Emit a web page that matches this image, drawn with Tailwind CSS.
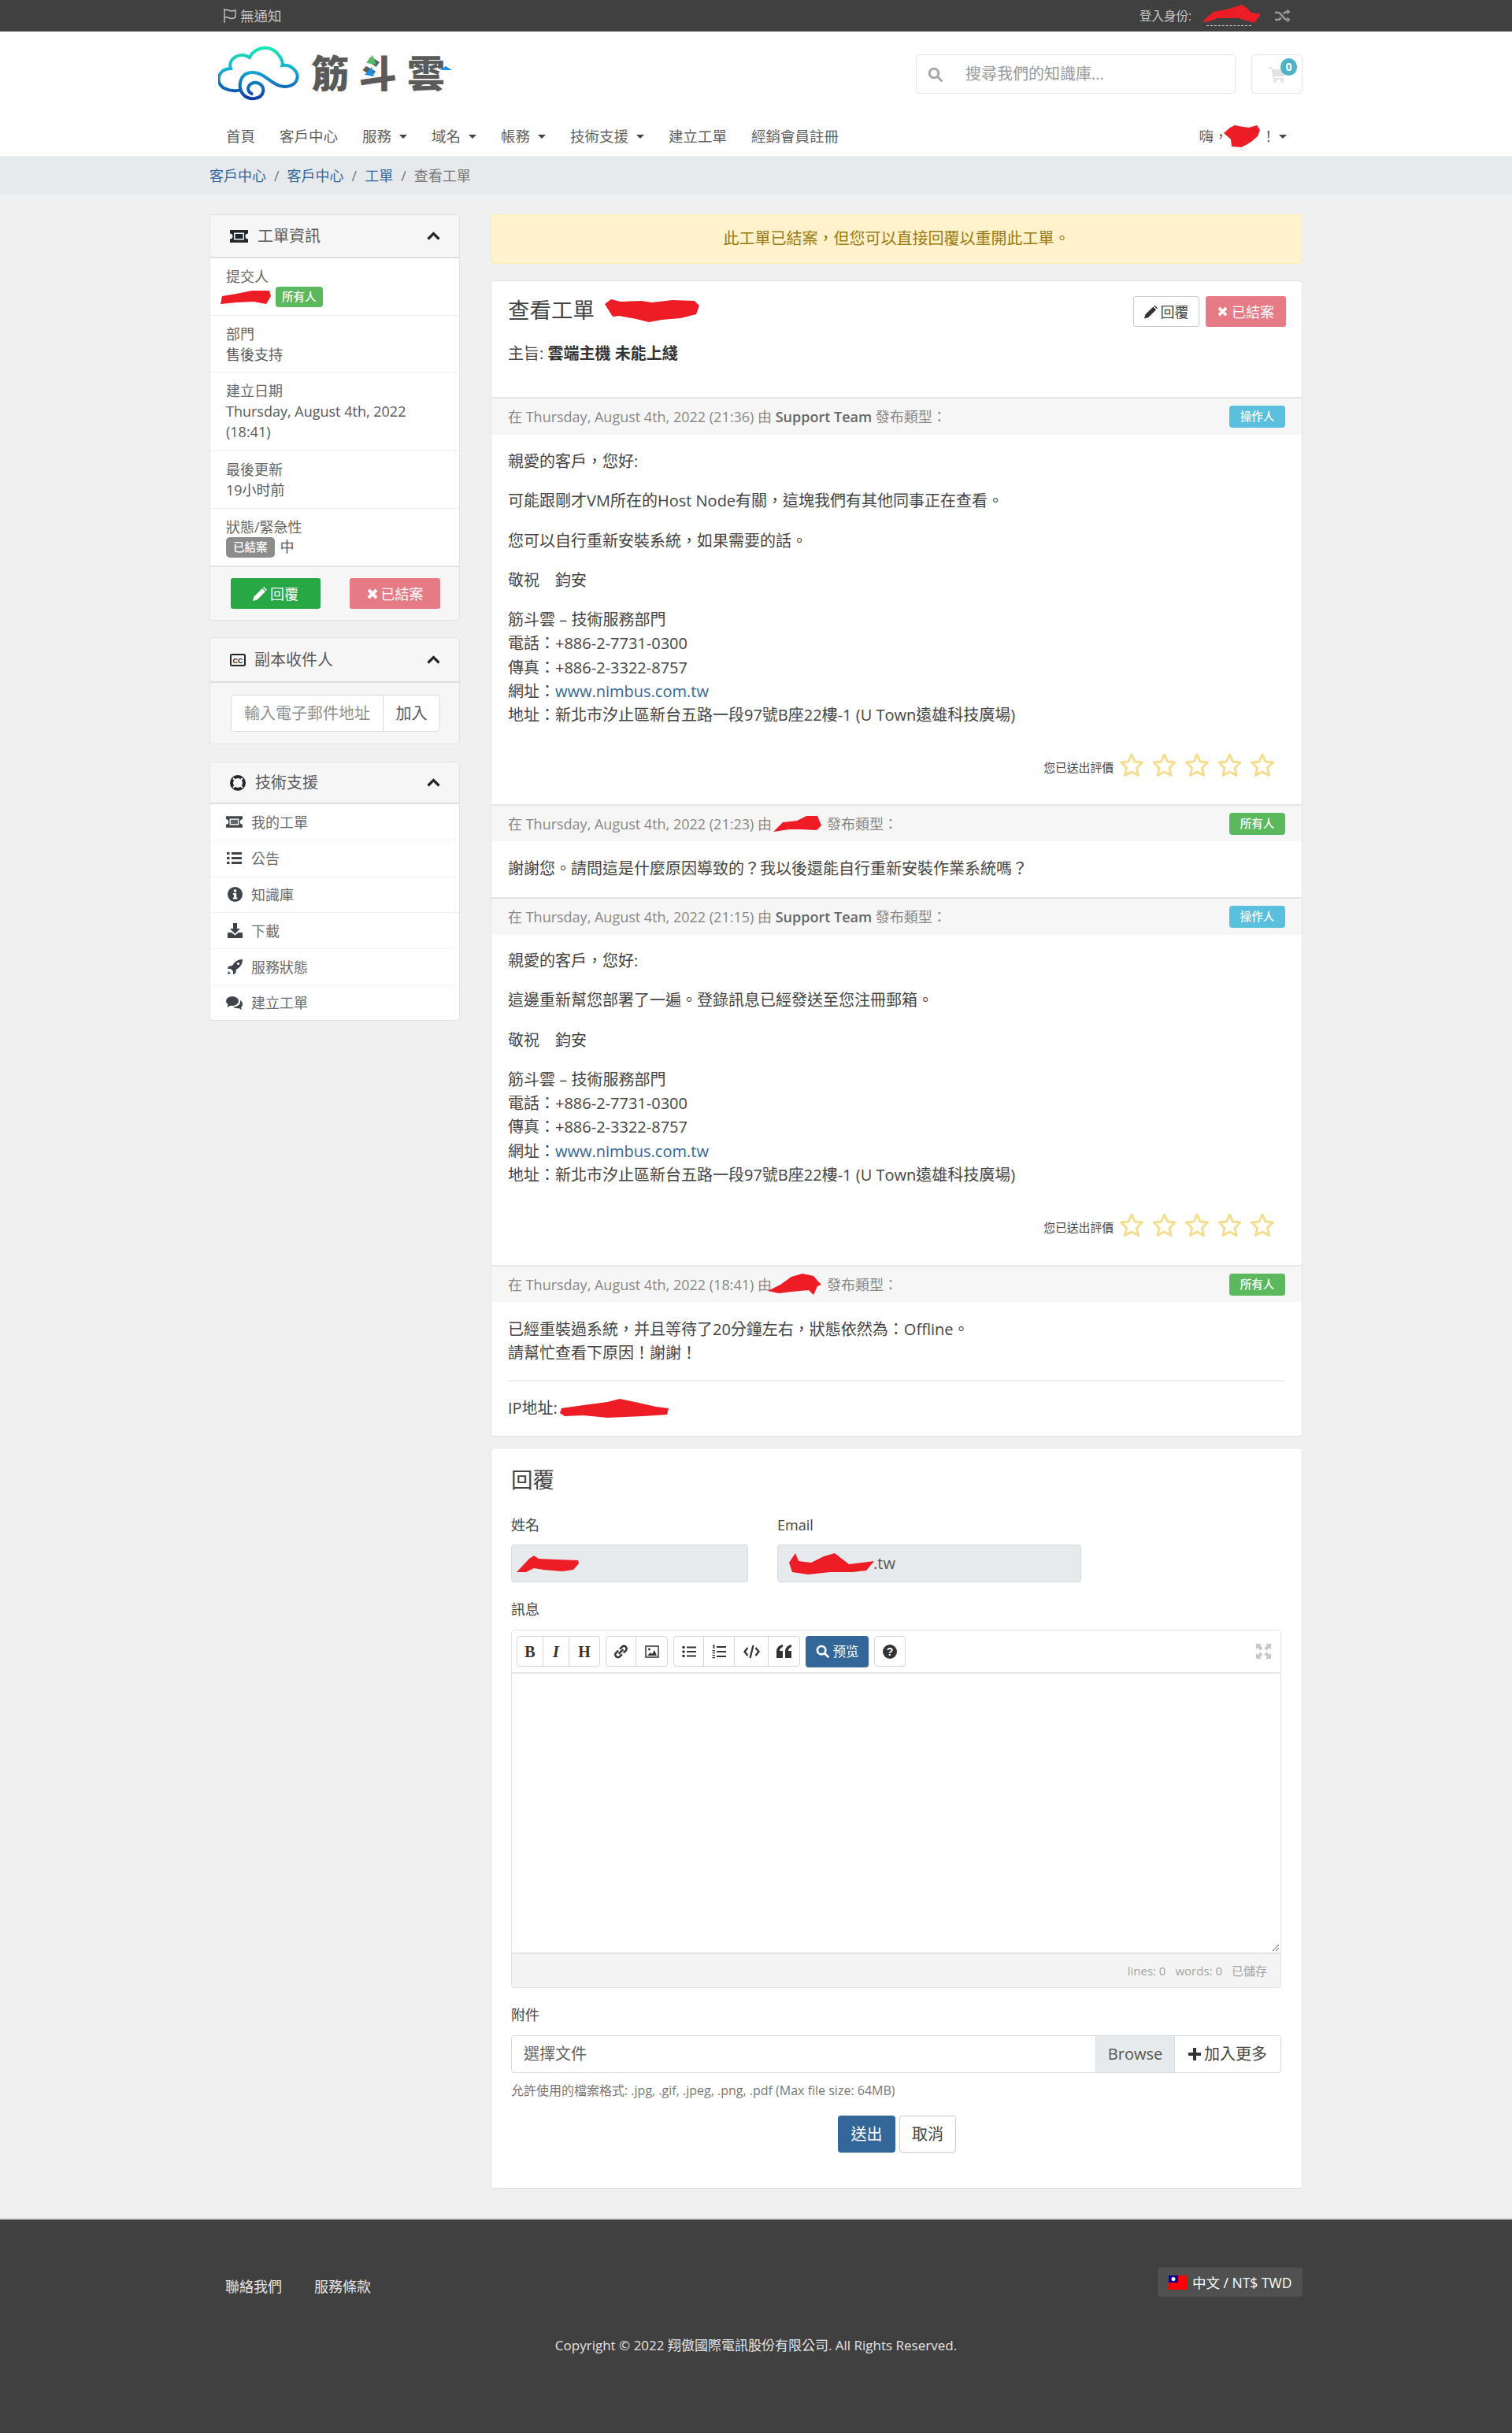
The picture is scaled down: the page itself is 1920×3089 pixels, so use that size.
<!DOCTYPE html>
<html lang="zh-Hant">

<head>
  <meta charset="utf-8">
  <meta name="viewport" content="width=device-width, initial-scale=1.0">
  <script src="https://cdn.jsdelivr.net/npm/@tailwindcss/browser@4"></script>
  <title>查看工單 - 筋斗雲</title>
</head>

<body class="bg-[#f0f0f0] text-[#58595b] [font-family:'Open_Sans','Noto_Sans_CJK_TC',sans-serif] text-[18px] leading-[26px] min-h-[3089px]">

  <!-- Top bar -->
  <div class="bg-[#404040] h-[40px]">
    <div class="w-[1388px] mx-auto h-full flex items-center justify-between text-[#c4c4c4]">
      <div class="flex items-center ml-[16px]">
        <svg class="w-[20px] h-[20px] mr-[3px]" viewBox="0 0 20 20" fill="none" stroke="#b5b5b5" stroke-width="1.6"><path d="M3 1v18"/><path d="M3 3c4-2 6 1 9 1 2 0 4-1 5-1v9c-1 .5-3 1.500-5 1.500-3 0-5-3-9-1"/></svg>
        <span class="text-[17.500px]">無通知</span>
      </div>
      <div class="flex items-center mr-[15px]">
        <span class="text-[15.500px] mr-[19px]">登入身份:</span>
        <span class="relative w-[57px] h-[24px] border-b border-dashed border-[#c4c4c4] mt-[2px] mr-[30px]">
          <svg class="absolute left-[-5px] top-[-3px] w-[74px] h-[23px]" viewBox="0 0 74 23"><path d="M0 21L14 9 30 6 50 0 56 4 62 10 74 12 66 23 45 17 20 17 5 22z" fill="#ee1c25"/></svg>
        </span>
        <svg class="w-[20px] h-[18px]" viewBox="0 0 20 18" fill="none" stroke="#9a9a9a" stroke-width="2.600"><path d="M0 5h4c4 0 7 9 11 9h2"/><path d="M0 14h4c1.500 0 2.500-1 3.500-2.500M11 6.500C12 5 13.500 4 15 4h2"/><path d="M15.500 0.500L19.500 4l-4 3.500zM15.500 10.500l4 3.500-4 3.500z" fill="#9a9a9a" stroke="none"/></svg>
      </div>
    </div>
  </div>

  <!-- Header -->
  <header class="bg-white h-[158px]">
    <div class="w-[1388px] mx-auto">
      <div class="flex justify-between items-start h-[108px]">
        <div class="relative ml-[11px] mt-[19px] w-[300px] h-[68px] flex items-center">
          <svg class="w-[103px] h-[70px] shrink-0" viewBox="50 55 310 210" fill="none">
            <defs>
              <linearGradient id="cloud" x1="0" y1="0" x2="0" y2="1">
                <stop offset="0" stop-color="#17e8b0"/>
                <stop offset="0.45" stop-color="#14a9d4"/>
                <stop offset="1" stop-color="#0b3fa6"/>
              </linearGradient>
            </defs>
            <path d="M130 225C90 232 50 215 52 180C54 155 75 142 98 142C85 105 135 75 170 100C190 60 250 45 285 95C295 110 298 120 295 130C330 125 358 155 352 180C345 210 310 215 285 208C245 195 220 150 170 158C130 165 125 215 145 240C165 265 215 262 222 230C228 200 190 185 170 205C160 218 165 232 178 238" stroke="url(#cloud)" stroke-width="12" stroke-linecap="round"/>
          </svg>
          <span class="ml-[15px] text-[48px] leading-none font-black tracking-[13px] text-[#5a5a5a] whitespace-nowrap">筋斗雲</span>
          <svg class="absolute left-0 top-0 w-[300px] h-[68px]" viewBox="0 0 300 68">
            <path d="M196 11L201 23 188 21z" fill="#57b96a"/>
            <path d="M195 26L198 38 186 36z" fill="#1b8fe8"/>
            <path d="M289 25L297 30 282 30z" fill="#1b8fe8"/>
          </svg>
        </div>
        <div class="flex mt-[29px]">
          <div class="w-[406px] h-[50px] bg-white border border-[#e3e3e3] rounded-[5px] flex items-center mr-[20px]">
            <svg class="w-[19px] h-[19px] ml-[14px] mr-[29px]" viewBox="0 0 19 19" fill="none" stroke="#a8a8a8" stroke-width="3"><circle cx="8" cy="8" r="5.800"/><path d="M12.500 12.500L17.500 17.500" stroke-linecap="round"/></svg>
            <span class="text-[20px] text-[#999]">搜尋我們的知識庫...</span>
          </div>
          <div class="relative w-[65px] h-[50px] border border-[#e3e3e3] rounded-[5px]">
            <svg class="absolute left-[21px] top-[15px] w-[22px] h-[20px]" viewBox="0 0 22 20" fill="#e2e2e2"><path d="M0 0h4l1 3h16l-2 9H7l.500 2H19v2H6L3 2H0z"/><circle cx="8" cy="18" r="2"/><circle cx="17" cy="18" r="2"/></svg>
            <span class="absolute left-[36px] top-[4px] w-[21px] h-[22px] rounded-full bg-[#4db3c6] text-white text-[14px] font-bold leading-[22px] text-center">0</span>
          </div>
        </div>
      </div>
      <nav class="flex items-center justify-between h-[50px] text-[18.500px] text-[#5f5f5f]">
        <div class="flex items-center ml-[21px] gap-[31px]">
          <span>首頁</span>
          <span>客戶中心</span>
          <span class="flex items-center">服務<i class="ml-[10px] w-0 h-0 border-x-[5px] border-x-transparent border-t-[5px] border-t-[#444]"></i></span>
          <span class="flex items-center">域名<i class="ml-[10px] w-0 h-0 border-x-[5px] border-x-transparent border-t-[5px] border-t-[#444]"></i></span>
          <span class="flex items-center">帳務<i class="ml-[10px] w-0 h-0 border-x-[5px] border-x-transparent border-t-[5px] border-t-[#444]"></i></span>
          <span class="flex items-center">技術支援<i class="ml-[10px] w-0 h-0 border-x-[5px] border-x-transparent border-t-[5px] border-t-[#444]"></i></span>
          <span>建立工單</span>
          <span>經銷會員註冊</span>
        </div>
        <div class="relative flex items-center mr-[20px]">
          <span>嗨，</span>
          <svg class="w-[46px] h-[28px] ml-[-5px] mr-[1px]" viewBox="0 0 46 28"><path d="M0 10L8 3 14 0 24 2 32 3 42 0 46 6 43 14 36 20 30 24 22 28 10 27 9 18z" fill="#ee1c25"/></svg>
          <span>！</span>
          <i class="ml-[4px] w-0 h-0 border-x-[5.500px] border-x-transparent border-t-[5.500px] border-t-[#444]"></i>
        </div>
      </nav>
    </div>
  </header>

  <!-- Breadcrumb -->
  <div class="bg-[#e7eaed] h-[49px]">
    <div class="w-[1388px] mx-auto h-full flex items-center text-[#336699] gap-[10px]">
      <span>客戶中心</span><span class="text-[#777]">/</span><span>客戶中心</span><span class="text-[#777]">/</span><span>工單</span><span class="text-[#777]">/</span><span class="text-[#777]">查看工單</span>
    </div>
  </div>

  <div class="w-[1388px] mx-auto flex items-start gap-[39px] pt-[25px]">

    <!-- Sidebar -->
    <aside class="w-[318px] shrink-0">
      <section class="bg-white border border-[#e2e2e2] rounded-[4px] overflow-hidden">
        <div class="h-[55px] bg-[#f6f6f6] border-b-2 border-[#dedede] flex items-center pl-[25px] pr-[24px] text-[20px]">
          <svg class="w-[23px] h-[16px] mr-[12px]" viewBox="0 0 23 16"><path d="M0 0h23v4.500a3.500 3.500 0 0 0 0 7V16H0v-4.500a3.500 3.500 0 0 0 0-7z" fill="#23272b"/><rect x="5" y="3.500" width="13" height="9" fill="#f6f6f6"/><rect x="6.500" y="5" width="10" height="6" fill="#23272b"/></svg>
          <span class="flex-1">工單資訊</span>
          <svg class="w-[17px] h-[11px]" viewBox="0 0 17 11" fill="none" stroke="#23272b" stroke-width="3.200"><path d="M1.500 9.500L8.500 2.500l7 7"/></svg>
        </div>
        <div class="px-[20px] py-[10px] border-b border-[#efefef] h-[73px]">
          <div class="text-[#666]">提交人</div>
          <div class="flex items-center">
            <svg class="w-[64px] h-[19px] -ml-[7px] mr-[6px]" viewBox="0 0 64 19"><path d="M2 8L20 5 40 1 62 1 64 8 58 18 42 15 20 16 0 18z" fill="#ee1c25"/></svg>
            <span class="bg-[#5cb85c] text-white text-[14.500px] leading-[26px] rounded-[4px] px-[8px] font-medium">所有人</span>
          </div>
        </div>
        <div class="px-[20px] py-[10px] border-b border-[#efefef] h-[72px]">
          <div class="text-[#666]">部門</div>
          <div>售後支持</div>
        </div>
        <div class="px-[20px] py-[10px] border-b border-[#efefef] h-[100px]">
          <div class="text-[#666]">建立日期</div>
          <div>Thursday, August 4th, 2022 (18:41)</div>
        </div>
        <div class="px-[20px] py-[10px] border-b border-[#efefef] h-[73px]">
          <div class="text-[#666]">最後更新</div>
          <div>19小时前</div>
        </div>
        <div class="px-[20px] py-[10px] h-[72px]">
          <div class="text-[#666]">狀態/緊急性</div>
          <div class="flex items-center">
            <span class="bg-[#8c8c8c] text-white text-[14.500px] leading-[26px] rounded-[5px] px-[9px] font-medium mr-[7px]">已結案</span>
            <span class="-mt-[3px]">中</span>
          </div>
        </div>
        <div class="h-[69px] bg-[#f6f6f6] border-t-2 border-[#e2e2e2] flex items-center justify-between pl-[26px] pr-[24px]">
          <span class="w-[114px] h-[39px] rounded-[3px] bg-[#28a745] text-white flex items-center justify-center gap-[4px]">
            <svg class="w-[18px] h-[18px]" viewBox="0 0 18 18" fill="#fff"><path d="M0 18l1.500-5.500L12 2l4 4L5.500 16.500zM13 1l1-1 4 4-1 1z"/></svg>回覆</span>
          <span class="w-[115px] h-[39px] rounded-[3px] bg-[#e67b86] text-white flex items-center justify-center gap-[4px]">
            <svg class="w-[14px] h-[14px]" viewBox="0 0 14 14" stroke="#fff" stroke-width="4"><path d="M2 2l10 10M12 2L2 12"/></svg>已結案</span>
        </div>
      </section>

      <section class="mt-[21px] bg-[#f6f6f6] border border-[#e2e2e2] rounded-[4px] overflow-hidden">
        <div class="h-[57px] border-b-2 border-[#dedede] flex items-center pl-[25px] pr-[24px] text-[20px]">
          <svg class="w-[20px] h-[16px] mr-[11px]" viewBox="0 0 20 16"><rect x="1" y="1" width="18" height="14" rx="1.500" fill="none" stroke="#23272b" stroke-width="2"/><text x="10" y="11.500" font-size="9" font-weight="700" text-anchor="middle" fill="#23272b" font-family="Liberation Sans, sans-serif">CC</text></svg>
          <span class="flex-1">副本收件人</span>
          <svg class="w-[17px] h-[11px]" viewBox="0 0 17 11" fill="none" stroke="#23272b" stroke-width="3.200"><path d="M1.500 9.500L8.500 2.500l7 7"/></svg>
        </div>
        <div class="pl-[26px] pr-[24px] py-[15px]">
          <div class="flex h-[47px] bg-white border border-[#d8dbde] rounded-[5px] text-[20px] items-center">
            <span class="w-[193px] h-full flex items-center pl-[16px] border-r border-[#d8dbde] text-[#8f8f8f] whitespace-nowrap">輸入電子郵件地址</span>
            <span class="flex-1 text-center">加入</span>
          </div>
        </div>
      </section>

      <section class="mt-[22px] bg-white border border-[#e2e2e2] rounded-[4px] overflow-hidden">
        <div class="h-[53px] bg-[#f6f6f6] border-b-2 border-[#dedede] flex items-center pl-[25px] pr-[24px] text-[20px]">
          <svg class="w-[20px] h-[20px] mr-[12px]" viewBox="0 0 20 20"><circle cx="10" cy="10" r="8" fill="none" stroke="#23272b" stroke-width="4"/><path d="M4 4l3 3M16 4l-3 3M4 16l3-3M16 16l-3-3" stroke="#f6f6f6" stroke-width="2"/></svg>
          <span class="flex-1">技術支援</span>
          <svg class="w-[17px] h-[11px]" viewBox="0 0 17 11" fill="none" stroke="#23272b" stroke-width="3.200"><path d="M1.500 9.500L8.500 2.500l7 7"/></svg>
        </div>
        <div class="h-[46px] flex items-center pl-[20px] border-b border-[#f2f2f2] text-[#6b6b6b]">
          <svg class="w-[21px] h-[15px] mr-[11px]" viewBox="0 0 23 16"><path d="M0 0h23v4.500a3.500 3.500 0 0 0 0 7V16H0v-4.500a3.500 3.500 0 0 0 0-7z" fill="#3f444a"/><rect x="5" y="3.500" width="13" height="9" fill="#fff"/><rect x="6.500" y="5" width="10" height="6" fill="#666"/></svg>我的工單</div>
        <div class="h-[46px] flex items-center pl-[20px] border-b border-[#f2f2f2] text-[#6b6b6b]">
          <svg class="w-[19px] h-[15px] mr-[12px] ml-[1px]" viewBox="0 0 19 15" fill="#3f444a"><rect y="0" width="3.500" height="3"/><rect y="6" width="3.500" height="3"/><rect y="12" width="3.500" height="3"/><rect x="6" y="0" width="13" height="3"/><rect x="6" y="6" width="13" height="3"/><rect x="6" y="12" width="13" height="3"/></svg>公告</div>
        <div class="h-[46px] flex items-center pl-[20px] border-b border-[#f2f2f2] text-[#6b6b6b]">
          <svg class="w-[19px] h-[19px] mr-[11px] ml-[2px]" viewBox="0 0 19 19"><circle cx="9.500" cy="9.500" r="9.500" fill="#3f444a"/><rect x="7.800" y="3.500" width="3.400" height="3" fill="#fff"/><path d="M6.800 8h4.400v5.500h1.200V15.500H6.800v-2h1.200V10H6.800z" fill="#fff"/></svg>知識庫</div>
        <div class="h-[46px] flex items-center pl-[20px] border-b border-[#f2f2f2] text-[#6b6b6b]">
          <svg class="w-[19px] h-[19px] mr-[11px] ml-[2px]" viewBox="0 0 19 19" fill="#3f444a"><path d="M7 0h5v7h4l-6.500 6.500L3 7h4z"/><path d="M0 12h5l4.500 3.500L14 12h5v7H0z"/></svg>下載</div>
        <div class="h-[46px] flex items-center pl-[20px] border-b border-[#f2f2f2] text-[#6b6b6b]">
          <svg class="w-[19px] h-[19px] mr-[11px] ml-[2px]" viewBox="0 0 19 19" fill="#3f444a"><path d="M19 0c0 6-3 10-8 13l-1 5-3 1v-4l-3-3H0l1-3 5-1c3-5 7-8 13-8z"/><path d="M1 15l3 3-4 1z"/><circle cx="13.500" cy="5.500" r="1.600" fill="#fff"/></svg>服務狀態</div>
        <div class="h-[44px] flex items-center pl-[20px] text-[#6b6b6b]">
          <svg class="w-[21px] h-[17px] mr-[11px]" viewBox="0 0 21 17" fill="#3f444a"><ellipse cx="8" cy="6" rx="8" ry="6"/><path d="M3 9L1.500 14 7 11z"/><path d="M18 5c2 1 3 3 3 5 0 2-1 3-2 4l1 3-4-2c-2 .5-5 0-7-2 5 .5 10-2 9-8z"/></svg>建立工單</div>
      </section>
    </aside>

    <!-- Main -->
    <main class="w-[1031px]">
      <div class="h-[63px] bg-[#fff2cc] border border-[#fdebb5] rounded-[4px] flex items-center justify-center text-[20px] text-[#9a7b12] pb-[2px]">此工單已結案，但您可以直接回覆以重開此工單。</div>

      <section class="mt-[21px] bg-white border border-[#e2e2e2] rounded-[4px] overflow-hidden">
        <div class="h-[147px] px-[21px] pt-[19px]">
          <div class="flex justify-between items-start">
            <h3 class="flex items-center text-[27.500px] leading-[38px] text-[#444] -mt-[2px] h-[40px]">查看工單<svg class="w-[124px] h-[29px] ml-[9px]" viewBox="0 0 124 29"><path d="M4 6L12 0 24 3 50 2 64 4 90 1 118 2 124 8 120 19 100 24 76 26 60 29 44 25 22 21 14 22z" fill="#ee1c25"/></svg></h3>
            <div class="flex gap-[8px] mr-[-1px]">
              <span class="w-[84px] h-[39px] bg-white border border-[#ccc] rounded-[3px] flex items-center justify-center gap-[4px] text-[#444]">
                <svg class="w-[17px] h-[18px]" viewBox="0 0 18 18" fill="#333"><path d="M0 18l1.500-5.500L12 2l4 4L5.500 16.500zM13 1l1-1 4 4-1 1z"/></svg>回覆</span>
              <span class="w-[102px] h-[39px] bg-[#e67b86] text-white rounded-[3px] flex items-center justify-center gap-[5px]">
                <svg class="w-[13px] h-[13px]" viewBox="0 0 14 14" stroke="#fff" stroke-width="4"><path d="M2 2l10 10M12 2L2 12"/></svg>已結案</span>
            </div>
          </div>
          <p class="mt-[19px] text-[20px] leading-[30px] text-[#444]">主旨: <b class="font-bold text-[#333]">雲端主機 未能上綫</b></p>
        </div>

        <!-- reply 1 -->
        <div class="h-[48px] bg-[#f6f6f6] border-t-2 border-[#e6e6e6] flex items-center justify-between px-[21px] text-[#888]">
          <span>在 Thursday, August 4th, 2022 (21:36) 由 <b class="font-semibold text-[#666]">Support Team</b> 發布類型：</span>
          <span class="w-[71px] h-[28px] rounded-[4px] bg-[#5bc0de] text-white text-[14.500px] leading-[28px] text-center font-medium">操作人</span>
        </div>
        <div class="px-[21px] pt-[19px] h-[469px] text-[20px] leading-[30.250px] text-[#444]">
          <p>親愛的客戶，您好:</p>
          <p class="mt-[20px]">可能跟剛才VM所在的Host Node有關，這塊我們有其他同事正在查看。</p>
          <p class="mt-[20px]">您可以自行重新安裝系統，如果需要的話。</p>
          <p class="mt-[20px]">敬祝　鈞安</p>
          <p class="mt-[20px]">筋斗雲 – 技術服務部門<br>電話：+886-2-7731-0300<br>傳真：+886-2-3322-8757<br>網址：<span class="text-[#336699]">www.nimbus.com.tw</span><br>地址：新北市汐止區新台五路一段97號B座22樓-1 (U Town遠雄科技廣場)</p>
          <div class="flex justify-end items-center mt-[32px] mr-[3px]">
            <span class="text-[14.800px] leading-[20px] mr-[7px] mt-[6px]">您已送出評價</span>
            <svg class="w-[208px] h-[32px]" viewBox="0 0 208 32" fill="none" stroke="#f5dd8e" stroke-width="3" stroke-linejoin="round"><path id="s" d="M16 3l4 9 9.500 1-7 7 2 9.500L16 25l-8.500 4.500 2-9.500-7-7L12 12z"/><use href="#s" x="41.500"/><use href="#s" x="83"/><use href="#s" x="124.500"/><use href="#s" x="166"/></svg>
          </div>
        </div>

        <!-- reply 2 -->
        <div class="h-[47px] bg-[#f6f6f6] border-t-2 border-[#e6e6e6] flex items-center justify-between px-[21px] text-[#888]">
          <span class="flex items-center whitespace-pre">在 Thursday, August 4th, 2022 (21:23) 由<svg class="w-[61px] h-[20px] ml-[2px] mr-[7px]" viewBox="0 0 61 20"><path d="M0 20L12 8 30 6 42 0 56 0 61 12 55 18 36 17 20 17z" fill="#ee1c25"/></svg>發布類型：</span>
          <span class="w-[71px] h-[28px] rounded-[4px] bg-[#5cb85c] text-white text-[14.500px] leading-[28px] text-center font-medium">所有人</span>
        </div>
        <div class="px-[21px] pt-[20px] h-[71px] text-[20px] leading-[30px] text-[#444]">
          <p>謝謝您。請問這是什麼原因導致的？我以後還能自行重新安裝作業系統嗎？</p>
        </div>

        <!-- reply 3 -->
        <div class="h-[48px] bg-[#f6f6f6] border-t-2 border-[#e6e6e6] flex items-center justify-between px-[21px] text-[#888]">
          <span>在 Thursday, August 4th, 2022 (21:15) 由 <b class="font-semibold text-[#666]">Support Team</b> 發布類型：</span>
          <span class="w-[71px] h-[28px] rounded-[4px] bg-[#5bc0de] text-white text-[14.500px] leading-[28px] text-center font-medium">操作人</span>
        </div>
        <div class="px-[21px] pt-[18px] h-[419px] text-[20px] leading-[30.250px] text-[#444]">
          <p>親愛的客戶，您好:</p>
          <p class="mt-[20px]">這邊重新幫您部署了一遍。登錄訊息已經發送至您注冊郵箱。</p>
          <p class="mt-[20px]">敬祝　鈞安</p>
          <p class="mt-[20px]">筋斗雲 – 技術服務部門<br>電話：+886-2-7731-0300<br>傳真：+886-2-3322-8757<br>網址：<span class="text-[#336699]">www.nimbus.com.tw</span><br>地址：新北市汐止區新台五路一段97號B座22樓-1 (U Town遠雄科技廣場)</p>
          <div class="flex justify-end items-center mt-[32px] mr-[3px]">
            <span class="text-[14.800px] leading-[20px] mr-[7px] mt-[6px]">您已送出評價</span>
            <svg class="w-[208px] h-[32px]" viewBox="0 0 208 32" fill="none" stroke="#f5dd8e" stroke-width="3" stroke-linejoin="round"><use href="#s"/><use href="#s" x="41.500"/><use href="#s" x="83"/><use href="#s" x="124.500"/><use href="#s" x="166"/></svg>
          </div>
        </div>

        <!-- reply 4 -->
        <div class="h-[47px] bg-[#f6f6f6] border-t-2 border-[#e6e6e6] flex items-center justify-between px-[21px] text-[#888]">
          <span class="flex items-center whitespace-pre">在 Thursday, August 4th, 2022 (18:41) 由<svg class="w-[68px] h-[27px] -ml-[5px] mr-[7px]" viewBox="0 0 68 27"><path d="M0 22L16 14 30 4 44 0 58 3 64 10 68 14 63 16 58 27 52 21 30 23 14 25z" fill="#ee1c25"/></svg>發布類型：</span>
          <span class="w-[71px] h-[28px] rounded-[4px] bg-[#5cb85c] text-white text-[14.500px] leading-[28px] text-center font-medium">所有人</span>
        </div>
        <div class="px-[21px] pt-[20px] pb-[20px] h-[170px] text-[20px] leading-[30px] text-[#444]">
          <p>已經重裝過系統，并且等待了20分鐘左右，狀態依然為：Offline。<br>請幫忙查看下原因！謝謝！</p>
          <hr class="my-[19px] border-t-2 border-[#eee]">
          <p class="flex items-center whitespace-pre">IP地址: <svg class="w-[138px] h-[24px] -ml-[2px]" viewBox="0 0 138 24"><path d="M2 12L30 8 60 4 76 0 100 5 122 10 138 12 136 20 105 22 60 24 30 21 6 22 0 18z" fill="#ee1c25"/></svg></p>
        </div>
      </section>

      <!-- Reply form -->
      <section class="mt-[14px] h-[941px] bg-white border border-[#e2e2e2] rounded-[4px] px-[25px] pt-[21px]">
        <h3 class="text-[27.500px] leading-[38px] text-[#444]">回覆</h3>
        <div class="flex gap-[37px] mt-[25px]">
          <div class="w-[301px]">
            <label class="block text-[#444] leading-[26px]">姓名</label>
            <div class="mt-[12px] h-[48px] bg-[#e7eaed] border border-[#d8dbde] rounded-[4px] flex items-center pl-[6px]">
              <svg class="w-[79px] h-[21px]" viewBox="0 0 79 21"><path d="M0 21L16 4 22 0 28 4 50 5 78 6 79 10 72 18 58 20 34 18 22 16 12 21z" fill="#ee1c25"/></svg>
            </div>
          </div>
          <div class="w-[386px]">
            <label class="block text-[#444] leading-[26px]">Email</label>
            <div class="mt-[12px] h-[48px] bg-[#e7eaed] border border-[#d8dbde] rounded-[4px] flex items-center pl-[14px] text-[#555]">
              <svg class="w-[108px] h-[27px] shrink-0" viewBox="0 0 108 27"><path d="M0 12L8 0 12 10 28 12 44 4 58 0 76 14 108 10 98 22 80 24 52 24 24 27 4 24z" fill="#ee1c25"/></svg><span class="text-[20px] -ml-[1px]">.tw</span>
            </div>
          </div>
        </div>
        <label class="block mt-[21px] text-[#444] leading-[26px]">訊息</label>
        <div class="mt-[13px] w-[978px] border border-[#e2e2e2] rounded-[4px] overflow-hidden">
          <div class="h-[55px] border-b-2 border-[#e8e8e8] flex items-center pl-[6px] pr-[12px] gap-[7px] text-[#333]">
            <div class="flex h-[39px] border border-[#d5d5d5] rounded-[4px] divide-x divide-[#d5d5d5] [font-family:'Liberation_Serif',serif] text-[20px] font-bold">
              <span class="w-[33px] flex items-center justify-center">B</span>
              <span class="w-[33px] flex items-center justify-center italic">I</span>
              <span class="w-[38px] flex items-center justify-center">H</span>
            </div>
            <div class="flex h-[39px] border border-[#d5d5d5] rounded-[4px] divide-x divide-[#d5d5d5]">
              <span class="w-[38px] flex items-center justify-center"><svg class="w-[19px] h-[20px]" viewBox="0 0 20 20" fill="none" stroke="#333" stroke-width="2.600"><path d="M8.500 6.500l3-3a3.500 3.500 0 0 1 5 5l-3 3"/><path d="M11.500 13.500l-3 3a3.500 3.500 0 0 1-5-5l3-3"/><path d="M7 13l6-6"/></svg></span>
              <span class="w-[39px] flex items-center justify-center"><svg class="w-[18px] h-[16px]" viewBox="0 0 18 16"><rect x="1" y="1" width="16" height="14" fill="none" stroke="#333" stroke-width="1.500"/><path d="M3 13l4-4 2 2 3-5 3 7z" fill="#333"/><circle cx="5.500" cy="5" r="1.500" fill="#333"/></svg></span>
            </div>
            <div class="flex h-[39px] border border-[#d5d5d5] rounded-[4px] divide-x divide-[#d5d5d5]">
              <span class="w-[38px] flex items-center justify-center"><svg class="w-[18px] h-[16px]" viewBox="0 0 18 16" fill="#333"><circle cx="2" cy="2.500" r="1.800"/><circle cx="2" cy="8" r="1.800"/><circle cx="2" cy="13.500" r="1.800"/><rect x="6" y="1.500" width="12" height="2"/><rect x="6" y="7" width="12" height="2"/><rect x="6" y="12.500" width="12" height="2"/></svg></span>
              <span class="w-[39px] flex items-center justify-center"><svg class="w-[18px] h-[18px]" viewBox="0 0 18 18" fill="#333"><rect x="6" y="2" width="12" height="2"/><rect x="6" y="8" width="12" height="2"/><rect x="6" y="14" width="12" height="2"/><rect x="1.500" y="0" width="1.800" height="5"/><rect x="0.500" y="7" width="3.500" height="1.300"/><rect x="0.500" y="10" width="3.500" height="1.300"/><rect x="0.500" y="13" width="3.500" height="1.300"/><rect x="0.500" y="16" width="3.500" height="1.300"/></svg></span>
              <span class="w-[43px] flex items-center justify-center"><svg class="w-[21px] h-[18px]" viewBox="0 0 21 18" fill="none" stroke="#333" stroke-width="2.300"><path d="M5.500 4L1.500 9l4 5M15.500 4l4 5-4 5M12.500 1l-4 16"/></svg></span>
              <span class="w-[39px] flex items-center justify-center"><svg class="w-[19px] h-[17px]" viewBox="0 0 19 17" fill="#333"><path d="M0 17V9c0-5 3-8 8-9v3C5 4 4 6 4 8h4v9zM11 17V9c0-5 3-8 8-9v3c-3 1-4 3-4 5h4v9z"/></svg></span>
            </div>
            <span class="w-[80px] h-[40px] bg-[#336699] text-white rounded-[4px] flex items-center justify-center gap-[5px] text-[16.500px]"><svg class="w-[17px] h-[19px]" viewBox="0 0 19 19" fill="none" stroke="#fff" stroke-width="3"><circle cx="8" cy="8" r="5.800"/><path d="M12.500 12.500L17.500 17.500" stroke-linecap="round"/></svg>预览</span>
            <span class="w-[40px] h-[39px] border border-[#d5d5d5] rounded-[4px] flex items-center justify-center"><svg class="w-[18px] h-[18px]" viewBox="0 0 18 18"><circle cx="9" cy="9" r="9" fill="#333"/><text x="9" y="14" font-size="14" font-weight="700" text-anchor="middle" fill="#fff" font-family="Liberation Sans, sans-serif">?</text></svg></span>
            <span class="flex-1 flex justify-end"><svg class="w-[19px] h-[19px]" viewBox="0 0 19 19" fill="#c7c7c7"><path d="M0 0h7L5 2l3.500 3.500-3 3L2 5 0 7zM19 0v7l-2-2-3.500 3.500-3-3L14 2l-2-2zM0 19v-7l2 2 3.500-3.500 3 3L5 17l2 2zM19 19h-7l2-2-3.500-3.500 3-3L17 14l2-2z"/></svg></span>
          </div>
          <div class="relative h-[354px] bg-white">
            <svg class="absolute right-[1px] bottom-[1px] w-[10px] h-[10px]" viewBox="0 0 10 10" stroke="#555" stroke-width="1" fill="none"><path d="M1 9l8-8M5 9l4-4"/></svg>
          </div>
          <div class="h-[44px] bg-[#f4f4f4] border-t-2 border-[#e2e2e2] flex items-center justify-end pr-[17px] gap-[12px] text-[15px] text-[#a3a3a3]">
            <span>lines: 0</span><span>words: 0</span><span>已儲存</span>
          </div>
        </div>
        <label class="block mt-[21px] text-[#444] leading-[26px]">附件</label>
        <div class="mt-[13px] w-[978px] h-[48px] border border-[#d8dbde] rounded-[4px] flex items-stretch overflow-hidden text-[#555]">
          <span class="flex-1 flex items-center pl-[15px] text-[#666] text-[20px]">選擇文件</span>
          <span class="w-[101px] bg-[#e7eaed] border-x border-[#d8dbde] flex items-center justify-center text-[20px]">Browse</span>
          <span class="w-[134px] flex items-center justify-center gap-[4px] text-[20px] text-[#444]"><svg class="w-[16px] h-[16px]" viewBox="0 0 16 16" fill="#333"><path d="M6 0h4v6h6v4h-6v6H6v-6H0V6h6z"/></svg>加入更多</span>
        </div>
        <p class="mt-[9px] text-[16px] leading-[26px] text-[#777]">允許使用的檔案格式: .jpg, .gif, .jpeg, .png, .pdf (Max file size: 64MB)</p>
        <div class="flex justify-center gap-[5px] mt-[19px] ml-[1px]">
          <span class="w-[73px] h-[47px] bg-[#336699] text-white rounded-[4px] flex items-center justify-center text-[20px]">送出</span>
          <span class="w-[72px] h-[47px] bg-white border border-[#ccc] rounded-[4px] flex items-center justify-center text-[20px] text-[#444]">取消</span>
        </div>
      </section>
    </main>
  </div>

  <!-- Footer -->
  <footer class="mt-[37px] h-[273px] bg-[#404040] border-t-2 border-[#d8d8d8] text-[#e4e4e4]">
    <div class="w-[1388px] mx-auto relative">
      <div class="flex justify-between items-start pt-[61px] h-[148px]">
        <div class="flex gap-[41px] ml-[20px] mt-[11px]"><span>聯絡我們</span><span>服務條款</span></div>
        <div class="w-[184px] h-[37px] bg-[#505050] rounded-[4px] flex items-center pl-[14px] text-white">
          <svg class="w-[24px] h-[18px] mr-[6px]" viewBox="0 0 24 18"><rect width="24" height="18" fill="#f00"/><rect width="12" height="9" fill="#000095"/><circle cx="6" cy="4.500" r="2.500" fill="#fff"/></svg>
          <span class="text-[17.500px] whitespace-nowrap">中文 / NT$ TWD</span>
        </div>
      </div>
      <p class="text-center text-[17px] leading-[26px] -mt-[1px]">Copyright © 2022 翔傲國際電訊股份有限公司. All Rights Reserved.</p>
    </div>
  </footer>
</body>

</html>
